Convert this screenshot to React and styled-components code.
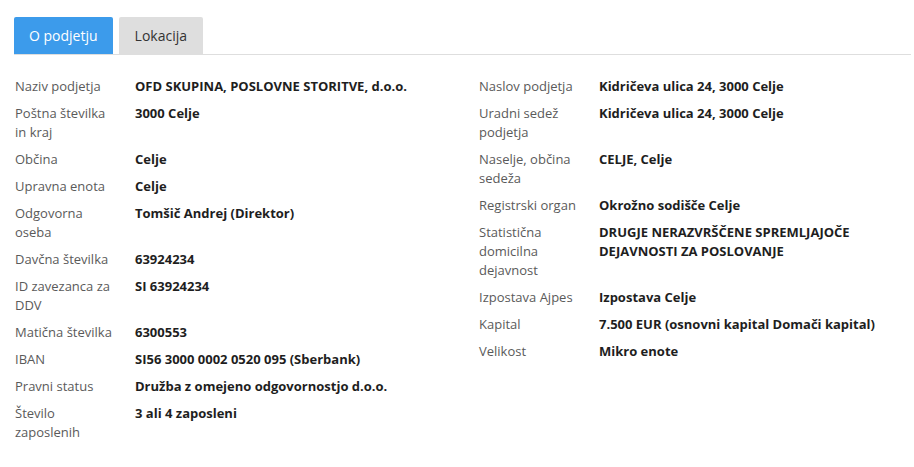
import React from "react";
import styled, { createGlobalStyle } from "styled-components";

const Global = createGlobalStyle`
  html, body { margin: 0; padding: 0; background: #fff; }
  body { font-family: "Open Sans", "Noto Sans", sans-serif; }
`;

const Page = styled.div`
  padding: 17px 3px 0 14px;
`;

const Tabs = styled.div`
  display: flex;
  gap: 6px;
  border-bottom: 1px solid #dedede;
`;

const Tab = styled.div`
  height: 37px;
  padding: 0 ${(p) => (p.$active ? "15px" : "16px")};
  display: flex;
  align-items: center;
  font-size: 14px;
  border-radius: 2px 2px 0 0;
  background: ${(p) => (p.$active ? "#3c9beb" : "#dedede")};
  color: ${(p) => (p.$active ? "#fff" : "#333")};
`;

const Columns = styled.div`
  display: grid;
  grid-template-columns: 464px 1fr;
  padding: 22px 0 0 1px;
`;

const Column = styled.div`
  display: flex;
  flex-direction: column;
  gap: 8px;
`;

const Row = styled.div`
  display: grid;
  grid-template-columns: 120px 1fr;
  font-size: 13px;
  line-height: 19px;
`;

const Label = styled.div`
  color: #5a5a5a;
  max-width: 100px;
`;

const Value = styled.div`
  color: #1e1e1e;
  font-weight: 700;
`;

const left = [
  ["Naziv podjetja", "OFD SKUPINA, POSLOVNE STORITVE, d.o.o."],
  ["Poštna številka in kraj", "3000 Celje"],
  ["Občina", "Celje"],
  ["Upravna enota", "Celje"],
  ["Odgovorna oseba", "Tomšič Andrej (Direktor)"],
  ["Davčna številka", "63924234"],
  ["ID zavezanca za DDV", "SI 63924234"],
  ["Matična številka", "6300553"],
  ["IBAN", "SI56 3000 0002 0520 095 (Sberbank)"],
  ["Pravni status", "Družba z omejeno odgovornostjo d.o.o."],
  ["Število zaposlenih", "3 ali 4 zaposleni"],
];

const right = [
  ["Naslov podjetja", "Kidričeva ulica 24, 3000 Celje"],
  ["Uradni sedež podjetja", "Kidričeva ulica 24, 3000 Celje"],
  ["Naselje, občina sedeža", "CELJE, Celje"],
  ["Registrski organ", "Okrožno sodišče Celje"],
  ["Statistična domicilna dejavnost", "DRUGJE NERAZVRŠČENE SPREMLJAJOČE DEJAVNOSTI ZA POSLOVANJE"],
  ["Izpostava Ajpes", "Izpostava Celje"],
  ["Kapital", "7.500 EUR (osnovni kapital Domači kapital)"],
  ["Velikost", "Mikro enote"],
];

const List = ({ items }) => (
  <Column>
    {items.map(([l, v]) => (
      <Row key={l}>
        <Label>{l}</Label>
        <Value>{v}</Value>
      </Row>
    ))}
  </Column>
);

export default function App() {
  return (
    <Page>
      <Global />
      <Tabs>
        <Tab $active>O podjetju</Tab>
        <Tab>Lokacija</Tab>
      </Tabs>
      <Columns>
        <List items={left} />
        <List items={right} />
      </Columns>
    </Page>
  );
}
